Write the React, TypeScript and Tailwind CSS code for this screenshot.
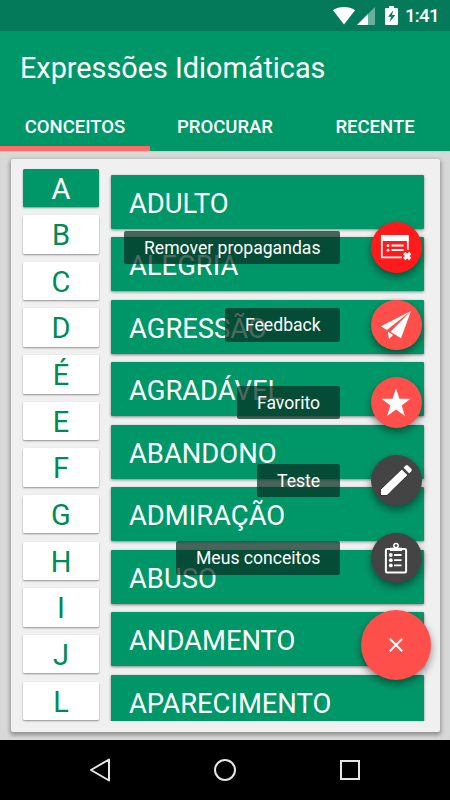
import React from 'react';

const letters = ['A', 'B', 'C', 'D', 'É', 'E', 'F', 'G', 'H', 'I', 'J', 'L'];
const concepts = ['ADULTO', 'ALEGRIA', 'AGRESSÃO', 'AGRADÁVEL', 'ABANDONO', 'ADMIRAÇÃO', 'ABUSO', 'ANDAMENTO', 'APARECIMENTO'];

const AdIcon = () => (
  <svg width="32" height="28" viewBox="0 0 32 28" fill="none" className="absolute left-[9px] top-[12px]">
    <path d="M22 23.3H1.8V2h26v14" stroke="#fff" strokeWidth="1.7" />
    <path d="M1 1h27.6v6H1z" fill="#fff" />
    <path d="M11.5 11.5h12M11.5 16h12" stroke="#fff" strokeWidth="2" />
    <circle cx="8" cy="11.7" r="1.4" fill="#fff" />
    <circle cx="8" cy="16.2" r="1.4" fill="#fff" />
    <path d="M24.2 19l6 6M30.2 19l-6 6" stroke="#fff" strokeWidth="3.2" />
  </svg>
);
const PlaneIcon = () => (
  <svg width="32" height="30" viewBox="0 0 32 30" fill="#fff" className="absolute left-[9px] top-[10px]">
    <path d="M31 1L1 16.3l5.8 3.6z" />
    <path d="M31 1L10.5 21.7l10.5 6.5z" />
    <path d="M7.8 21.5l5.2 3.4-4 4.2z" />
  </svg>
);
const StarIcon = () => (
  <svg width="30" height="29" viewBox="0 0 30 29" fill="#fff" className="absolute left-[10px] top-[11px]">
    <path d="M15 .5l3.5 10.2 11 .1-8.8 6.6 3.2 10.5-8.9-6.3-8.9 6.3 3.2-10.5-8.8-6.6 11-.1z" />
  </svg>
);
const PencilIcon = () => (
  <svg width="34" height="34" viewBox="0 0 34 34" className="absolute left-[8px] top-[8px]">
    <path d="M1.5 32.5v-6L22.8 6.1l6 6L8 32.5z" fill="#fff" stroke="#191919" strokeWidth=".8" />
    <path d="M24.2 4.7l2.6-2.6q1-.8 2 0l4 4q.8 1 0 2l-2.6 2.6z" fill="#fff" stroke="#191919" strokeWidth=".5" />
  </svg>
);
const ClipboardIcon = () => (
  <svg width="24" height="32" viewBox="0 0 24 32" fill="none" stroke="#fff" className="absolute left-[13px] top-[9px]">
    <rect x="1.9" y="7" width="20.2" height="23.5" rx="1.2" strokeWidth="2" />
    <path d="M6 6.2h12v2.2H6z" fill="#fff" />
    <circle cx="12" cy="3.6" r="2.2" strokeWidth="1.5" />
    <path d="M10 13h7.5M10 18.2h7.5M10 23.4h7.5" strokeWidth="1.8" />
    <g fill="#fff" stroke="none">
      <circle cx="6.8" cy="13" r="1.9" />
      <circle cx="6.8" cy="18.2" r="1.9" />
      <circle cx="6.8" cy="23.4" r="1.9" />
    </g>
  </svg>
);

const actions = [
  { label: 'Remover propagandas', width: 'w-[216px]', color: 'bg-[#ff1b1b]', Icon: AdIcon },
  { label: 'Feedback', width: 'w-[115px]', color: 'bg-[#ff4f4a]', Icon: PlaneIcon },
  { label: 'Favorito', width: 'w-[103px]', color: 'bg-[#ff4f4a]', Icon: StarIcon },
  { label: 'Teste', width: 'w-[83px]', color: 'bg-[#444444]', Icon: PencilIcon },
  { label: 'Meus conceitos', width: 'w-[164px]', color: 'bg-[#444444]', Icon: ClipboardIcon },
];

const StatusBar = () => (
  <div className="flex h-[31px] shrink-0 items-center justify-end bg-[#047a5a] pr-[10px] text-white">
    <svg width="22" height="18" viewBox="0 0 22 18" fill="#fff" className="mr-[2.5px]">
      <path d="M0 3.2C6-1 16-1 22 3.2L11 17.5z" />
    </svg>
    <svg width="18" height="18" viewBox="0 0 18 18" fill="#fff">
      <path d="M18 0v18H0z" opacity=".4" />
      <path d="M11 7v11H0z" />
    </svg>
    <svg width="13" height="19" viewBox="0 0 13 19" className="ml-[10px]">
      <path d="M4 0h5v2h3q1 0 1 1v15q0 1-1 1H1q-1 0-1-1V3q0-1 1-1h3z" fill="#fff" />
      <path d="M8.3 4.2L3 10.8h3.2L4.5 16.3 10.3 9H7z" fill="#047a5a" />
    </svg>
    <span className="ml-[7px] w-[35px] pt-[2px] whitespace-nowrap text-[18.8px] leading-[31px] font-medium tracking-[-0.8px]">1:41</span>
  </div>
);

export default function App() {
  return (
    <div className="relative flex h-[800px] w-[450px] flex-col overflow-hidden bg-[#d8d8d8] font-['Roboto',sans-serif]">
      <StatusBar />
      <header className="flex h-[120px] shrink-0 flex-col bg-[#009768] text-white">
        <h1 className="h-[73px] pl-[20px] text-[28.8px] leading-[74px] whitespace-nowrap">Expressões Idiomáticas</h1>
        <nav className="grid h-[47px] grid-cols-3 grid-rows-[47px] text-center text-[18.5px] leading-[46px] font-medium">
          <span className="h-[47px] border-b-[5px] border-[#ff6e64]">CONCEITOS</span>
          <span>PROCURAR</span>
          <span>RECENTE</span>
        </nav>
      </header>
      <main className="h-[589px] shrink-0 px-[10.5px] pt-[8px] shadow-[inset_0_1px_1px_#c4d0cb]">
        <div className="flex h-[573px] rounded-[2px] bg-[#f0f0f0] pl-[12.5px] pt-[9.5px] shadow-[0_2px_4px_1px_rgba(0,0,0,0.35)]">
          <div className="flex w-[76px] flex-col gap-[8.15px]">
            {letters.map((l, i) => (
              <div
                key={l}
                className={
                  'h-[38.5px] shrink-0 rounded-[1.5px] text-center text-[29px] leading-[40px] shadow-[0_1px_2px_rgba(0,0,0,0.4)] ' +
                  (i === 0 ? 'bg-[#009768] text-white' : 'bg-white text-[#008a55]')
                }
              >
                {l}
              </div>
            ))}
          </div>
          <div className="-ml-[2px] mt-[3px] flex h-[549.5px] w-[331px] flex-col gap-[8.5px] overflow-hidden pl-[14px] pr-[4px] pt-[3px]">
            {concepts.map((c) => (
              <div
                key={c}
                className="h-[54px] shrink-0 rounded-[1px] bg-[#009768] pl-[18px] text-[27.4px] leading-[58px] whitespace-nowrap text-white shadow-[0_1px_3px_rgba(0,0,0,0.45)]"
              >
                {c}
              </div>
            ))}
          </div>
        </div>
      </main>
      <footer className="flex h-[60px] shrink-0 items-center bg-black">
        <svg width="450" height="60" viewBox="0 0 450 60" fill="none" stroke="#e6e6e6" strokeWidth="2">
          <path d="M109 19.5v21L91 30z" strokeLinejoin="round" />
          <circle cx="225" cy="30" r="10" />
          <rect x="341" y="21" width="18" height="18" />
        </svg>
      </footer>

      <div className="absolute right-[19px] top-[222px] flex flex-col items-end">
        {actions.map(({ label, width, color, Icon }) => (
          <div key={label} className="flex h-[77.7px] items-start pr-[9.5px]">
            <div
              className={
                'mr-[31px] mt-[8.5px] h-[33.5px] rounded-[2px] bg-[#052f21]/72 pl-[20px] text-[17.6px] leading-[34px] whitespace-nowrap text-white ' + width
              }
            >
              {label}
            </div>
            <div className={'relative size-[50.5px] rounded-full shadow-[0_4px_8px_rgba(0,0,0,0.45)] ' + color}>
              <Icon />
            </div>
          </div>
        ))}
        <div className="-mt-[0.5px] flex size-[70px] items-center justify-center rounded-full bg-[#ff4f4a] shadow-[0_4px_8px_rgba(0,0,0,0.45)]">
          <svg width="14" height="14" viewBox="0 0 14 14" stroke="#fff" strokeWidth="2">
            <path d="M.8.8l12.4 12.4M13.2.8L.8 13.2" />
          </svg>
        </div>
      </div>
    </div>
  );
}
